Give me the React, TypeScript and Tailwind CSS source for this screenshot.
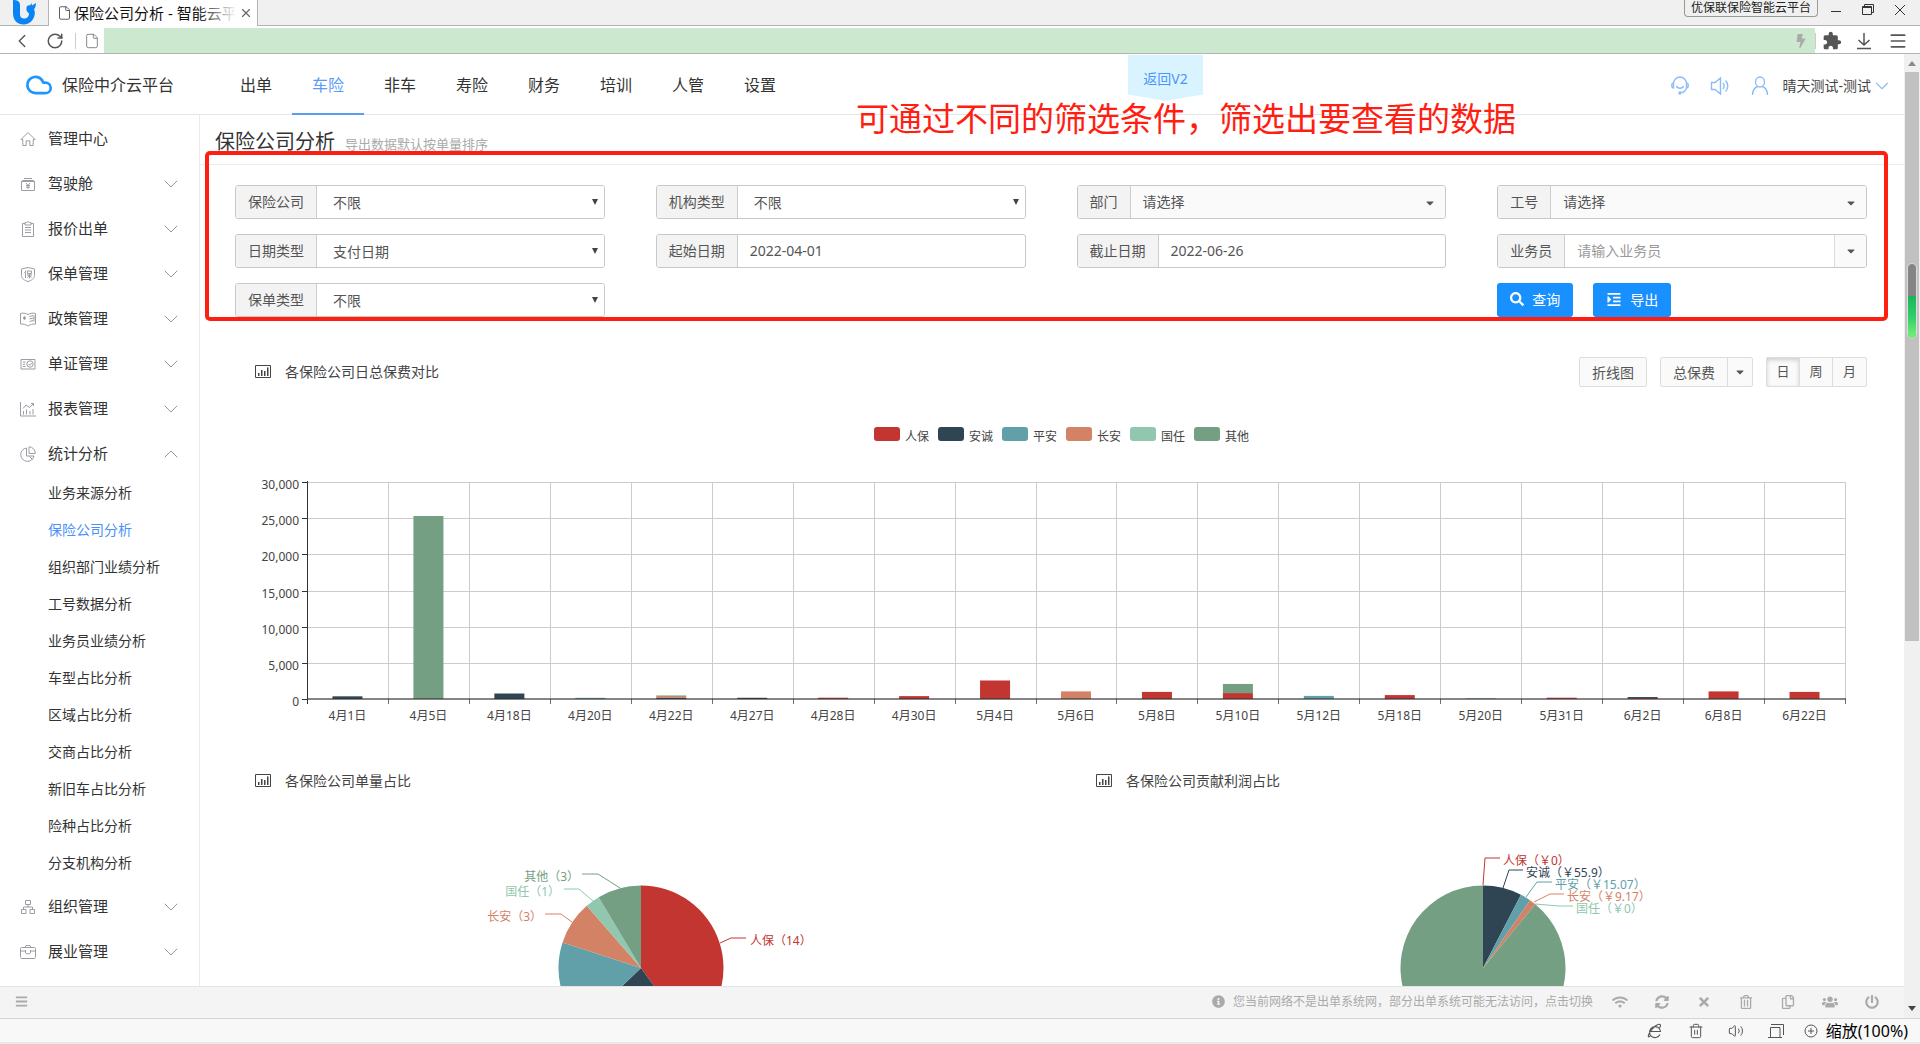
import React, { useState } from 'react';
import { Cloud, ChevronDown, ChevronUp, ChevronLeft, RotateCw, File, Trash2, Volume2, Menu, X } from 'lucide-react';
import { FaInfoCircle, FaWifi, FaSyncAlt, FaTimes, FaRegTrashAlt, FaRegCopy, FaUsers, FaPowerOff, FaBars, FaSearch, FaIndent, FaBolt, FaCaretDown } from 'react-icons/fa';
import { MdExtension } from 'react-icons/md';

const COLORS: Record<string, string> = {
    人保: '#c23531',
    安诚: '#2f4554',
    平安: '#61a0a8',
    长安: '#d48265',
    国任: '#91c7ae',
    其他: '#749f83',
};

const NAV = ['出单', '车险', '非车', '寿险', '财务', '培训', '人管', '设置'];

type IconName = 'home' | 'cockpit' | 'clipboard' | 'shield' | 'policy' | 'cert' | 'report' | 'pie' | 'org' | 'case';

interface MenuEntry {
    label: string;
    icon: IconName;
    children?: string[];
    leaf?: boolean;
}

const MENU: MenuEntry[] = [
    { label: '管理中心', icon: 'home', leaf: true },
    { label: '驾驶舱', icon: 'cockpit' },
    { label: '报价出单', icon: 'clipboard' },
    { label: '保单管理', icon: 'shield' },
    { label: '政策管理', icon: 'policy' },
    { label: '单证管理', icon: 'cert' },
    { label: '报表管理', icon: 'report' },
    {
        label: '统计分析',
        icon: 'pie',
        children: ['业务来源分析', '保险公司分析', '组织部门业绩分析', '工号数据分析', '业务员业绩分析', '车型占比分析', '区域占比分析', '交商占比分析', '新旧车占比分析', '险种占比分析', '分支机构分析'],
    },
    { label: '组织管理', icon: 'org' },
    { label: '展业管理', icon: 'case' },
];

const MenuIcon: React.FC<{ name: IconName }> = ({ name }) => (
    <svg viewBox="0 0 16 16" className="w-4 h-4 shrink-0 text-[#9a9da3]" fill="none" stroke="currentColor" strokeWidth="1">
        {name === 'home' && <path d="M1 8.5 8 1.5l7 7h-1.8v6h-3.4V9.8H6.2v4.7H2.8v-6z" strokeLinejoin="round" />}
        {name === 'cockpit' && (
            <>
                <path d="M4 2.5h8M1.5 5.5h13v9h-13zM1.5 5.5l1-1h11l1 1" />
                <path d="m6 7 2 2.5L10 7M6 9.5h4M6 11.2h4M8 9.5V13" />
            </>
        )}
        {name === 'clipboard' && <path d="M5 2.5H2.5v13h11v-13H11M5 1.5h1.5L8 .5l1.5 1H11v2.500H5zM5 6.500h6M5 9h6M5 11.500h6" />}
        {name === 'shield' && (
            <>
                <path d="M1.500 3 8 1.500 14.500 3v6.500c0 3-3 5-6.500 6-3.500-1-6.500-3-6.500-6z" />
                <path d="M6 4.500 4.500 7M5.500 6.500V12M7.500 5h4v2.500h-4zM7 9h5M9.500 7.500V12.500M9.500 9 7.500 11.500M9.500 9l2 2.500" />
            </>
        )}
        {name === 'policy' && (
            <>
                <path d="M.500 2.500c3-1 5.500 0 7.500 1 2-1 4.500-2 7.500-1v10.500c-3 0-5.500.500-7.500 2-2-1.500-4.500-2-7.500-2z" />
                <path d="M9.500 5.500l4-1M9.500 8l4-1M9.500 10.500l4-1M14 4.500v6" />
                <path d="M4.500 5.200v3.600M3 6l3 2M6 6 3 8" />
            </>
        )}
        {name === 'cert' && (
            <>
                <path d="M1 3.500h14v9.500H1zM3 6h2.500M3 8.300h2M3 10.500h2.500" />
                <circle cx="10" cy="8" r="3.200" />
                <path d="m8.500 8 1.200 1.200 2.300-2.400" />
            </>
        )}
        {name === 'report' && <path d="M.500 1v14H16M3.500 13.500V10M6.500 13.500V8.500M10 13.500V10M13 13.500V8M3 7.500l3-3.500 3.500 2.500L13.500 2.500M11 2.500h2.500V5" />}
        {name === 'pie' && <path d="M6.500 2A6.700 6.700 0 1 0 14 10H6.500zM9 .800A6.500 6.500 0 0 1 15.300 7.500H9zM9.500 10.500l3 3" />}
        {name === 'org' && <path d="M5.500 1.500h5v4h-5zM1.500 10.500h4.500v4H1.500zM10 10.500h4.500v4H10zM8 5.500V8M3.500 10.500V8h9v2.500" />}
        {name === 'case' && <path d="M2 3.500h12c1 0 1.500.500 1.500 1.500v8.500c0 .500-.500 1-1.500 1H2c-1 0-1.500-.500-1.500-1V5C.500 4 1 3.500 2 3.500zM5 3.500 6 1.500h4l1 2M.500 7h5M10.500 7h5M5.500 6v3c0 1 5 1 5 0V6" />}
    </svg>
);

const BrowserChrome: React.FC = () => (
    <div className="shrink-0">
        <div className="flex h-[26px] bg-[#f0f0f0] border-b border-[#b4b4b4]">
            <div className="w-12 pl-3 shrink-0">
                <svg viewBox="0 0 24 25" className="w-6 h-[25px]">
                    <path d="M1 0c4 0 7 1 7 5v9c0 3 1.500 4.500 4 4.500 3 0 5-2 5-5-2-1.500-3-3.500-2.500-6C15 6 16 5 18 5.500L19.500 3 20 5.500 24 3c0 3-1 5-2 6.500 1 1.500 1 4 .5 6C21 21 17 24.500 12 24.500 5 24.500 1 20 1 13z" fill="#0a84f5" />
                </svg>
            </div>
            <div className="relative flex items-center h-[26px] w-[210px] pl-2 pr-1 bg-white border-x border-[#b4b4b4] shrink-0">
                <File className="w-[15px] h-4 text-[#555] shrink-0" strokeWidth={1.500} />
                <span className="ml-[2px] flex-1 overflow-hidden whitespace-nowrap text-[15px] leading-6 text-[#111]">保险公司分析 - 智能云平台</span>
                <span className="absolute right-5 top-0 h-6 w-10 bg-linear-to-r from-transparent to-white" />
                <button aria-label="关闭标签" className="ml-1"><X className="w-[14px] h-[14px] text-[#666]" strokeWidth={2} /></button>
            </div>
            <div className="flex-1" />
            <div className="h-[17px] px-[6px] mr-3 border border-t-0 border-[#999] rounded-b text-[12px] leading-4 text-[#222]">优保联保险智能云平台</div>
            <div className="flex items-start gap-5 pr-[14px] pt-1 text-[#333]">
                <button aria-label="最小化">
                    <svg viewBox="0 0 12 12" className="w-3 h-3" fill="none" stroke="currentColor"><path d="M1 7.500h10" /></svg>
                </button>
                <button aria-label="还原">
                    <svg viewBox="0 0 12 12" className="w-3 h-3" fill="none" stroke="currentColor"><path d="M2.500 2V.500h9v8H10M.500 2.500h9v8h-9zM.500 3.500h9" /></svg>
                </button>
                <button aria-label="关闭">
                    <svg viewBox="0 0 12 12" className="w-3 h-3" fill="none" stroke="currentColor"><path d="m1 1 10 10M11 1 1 11" /></svg>
                </button>
            </div>
        </div>
        <div className="flex items-center h-7 pt-[2px] bg-white border-b border-[#b4b4b4] text-[#555]">
            <button aria-label="后退" className="ml-[11px]"><ChevronLeft className="w-[22px] h-[22px]" strokeWidth={1.500} /></button>
            <button aria-label="刷新" className="ml-[13px]"><RotateCw className="w-[18px] h-[18px]" strokeWidth={2} /></button>
            <span className="ml-[11px] w-px h-4 bg-[#ccc]" />
            <File className="ml-2 mr-1 w-4 h-4 text-[#888]" strokeWidth={1.500} />
            <div className="flex flex-1 items-center justify-end self-stretch pr-2 bg-[#cce8cf]">
                <FaBolt className="w-3 h-[14px] text-[#aaa]" />
            </div>
            <span className="w-px h-4 bg-[#ccc]" />
            <button aria-label="扩展" className="ml-[6px]"><MdExtension className="w-5 h-5" /></button>
            <button aria-label="下载" className="ml-[14px]">
                <svg viewBox="0 0 16 18" className="w-4 h-[18px]" fill="none" stroke="currentColor" strokeWidth="1.500"><path d="M8 1v12M2.500 8 8 13l5.500-5M1 16.500h14" /></svg>
            </button>
            <button aria-label="菜单" className="ml-4 mr-3"><Menu className="w-5 h-5" strokeWidth={2} /></button>
        </div>
    </div>
);

const Header: React.FC = () => (
    <header className="relative flex items-center h-[61px] shrink-0 bg-white border-b border-[#e6e6e6]">
        <div className="flex items-center w-[220px] pl-[25px] pt-[2px] gap-[9px] shrink-0">
            <Cloud className="w-7 h-7 text-[#1e96ff]" strokeWidth={2.300} />
            <span className="text-[16px] leading-6 text-[#333]">保险中介云平台</span>
        </div>
        <nav className="flex h-[61px]">
            {NAV.map((item) => (
                <a
                    key={item}
                    href="#"
                    className={item === '车险'
                        ? 'flex items-center w-[72px] justify-center text-[16px] text-[#5b9bf8] border-b-2 border-[#5b9bf8] pt-1'
                        : 'flex items-center w-[72px] justify-center text-[16px] text-[#333] pt-[2px]'}
                >
                    {item}
                </a>
            ))}
        </nav>
        <a href="#" className="absolute left-[1128px] top-px w-[75px] h-[46px] pt-3 text-center text-[14px] leading-6 text-[#4d94fa] bg-[#daf4ff] [clip-path:polygon(0_0,100%_0,100%_86%,50%_100%,0_86%)]">返回V2</a>
        <div className="ml-auto flex items-center gap-5 pr-[11px] pt-1 text-[#8cbcf8]">
            <button aria-label="客服">
                <svg viewBox="0 0 20 20" className="w-5 h-5" fill="none" stroke="currentColor" strokeWidth="1.400"><path d="M3.500 7.500a6.500 6.500 0 0 1 13 0M3.500 7C1 7.500 1 11.500 3.500 12zM16.500 7c2.500.500 2.500 4.500 0 5zM16.500 12c-1 3-3 4.500-5 4.500M6.500 10c1 3 6 3 7 0" /><circle cx="10" cy="17" r="1" fill="currentColor" /></svg>
            </button>
            <button aria-label="公告">
                <svg viewBox="0 0 20 20" className="w-5 h-5" fill="none" stroke="currentColor" strokeWidth="1.400"><path d="M1.500 6.500H5l5.500-4.500v16L5 13.500H1.500zM13 7c1.500 1.500 1.500 4.500 0 6M15.500 4.500c3 3 3 8 0 11" /></svg>
            </button>
            <button className="flex items-center">
                <svg viewBox="0 0 20 20" className="w-5 h-5 mr-3" fill="none" stroke="currentColor" strokeWidth="1.400"><ellipse cx="10" cy="6" rx="4.500" ry="5" /><path d="M7.500 10.500C4 12 2.500 15 2.500 19M12.500 10.500C16 12 17.500 15 17.500 19" /></svg>
                <span className="text-[14px] leading-6 text-[#444]">晴天测试-测试</span>
                <ChevronDown className="w-[22px] h-[22px]" strokeWidth={1.200} />
            </button>
        </div>
    </header>
);

const Sidebar: React.FC = () => (
    <aside className="w-[200px] shrink-0 border-r border-[#ebebeb] pt-px overflow-hidden">
        {MENU.map((entry) => (
            <div key={entry.label}>
                <button className="flex items-center w-full h-[45px] pl-5 pr-4 text-[15px] text-[#333]">
                    <MenuIcon name={entry.icon} />
                    <span className="ml-3">{entry.label}</span>
                    {!entry.leaf && (entry.children
                        ? <ChevronUp className="ml-auto w-6 h-6 text-[#999]" strokeWidth={1} />
                        : <ChevronDown className="ml-auto w-6 h-6 text-[#999]" strokeWidth={1} />)}
                </button>
                {entry.children && (
                    <div className="-mt-[2px] pb-[3px]">
                        {entry.children.map((child) => (
                            <a
                                key={child}
                                href="#"
                                className={child === '保险公司分析'
                                    ? 'flex items-center h-[37px] pl-12 text-[14px] text-[#4a90f9]'
                                    : 'flex items-center h-[37px] pl-12 text-[14px] text-[#333]'}
                            >
                                {child}
                            </a>
                        ))}
                    </div>
                )}
            </div>
        ))}
    </aside>
);

const Addon: React.FC<{ id: string; label: string }> = ({ id, label }) => (
    <label htmlFor={id} className="flex items-center shrink-0 px-3 pb-[2px] bg-[#f3f3f3] border-r border-[#ccc] text-[14px]">{label}</label>
);

const GROUP = 'relative flex h-[34px] bg-white border border-[#c8c8c8] rounded-[3px] overflow-hidden text-[#555]';

const SelectField: React.FC<{ id: string; label: string; value: string }> = ({ id, label, value }) => (
    <div className={GROUP}>
        <Addon id={id} label={label} />
        <select id={id} className="flex-1 min-w-0 appearance-none bg-white pl-4 text-[14px] outline-none">
            <option>{value}</option>
        </select>
        <svg viewBox="0 0 6 6" className="absolute right-[6px] top-[13px] w-[6px] h-[6px] pointer-events-none"><path d="M0 0h6L3 6z" fill="#444" /></svg>
    </div>
);

const PickerField: React.FC<{ id: string; label: string }> = ({ id, label }) => (
    <div className={GROUP}>
        <Addon id={id} label={label} />
        <button id={id} className="flex flex-1 items-center justify-between pl-3 pr-[9px] pb-[2px] bg-[#fafafa] text-[14px]">
            请选择
            <FaCaretDown className="w-3 h-3 mt-1" />
        </button>
    </div>
);

const DateField: React.FC<{ id: string; label: string; initial: string }> = ({ id, label, initial }) => {
    const [value, setValue] = useState(initial);
    return (
        <div className={GROUP}>
            <Addon id={id} label={label} />
            <input id={id} type="text" value={value} onChange={(e) => setValue(e.target.value)} className="flex-1 min-w-0 px-3 pb-[2px] text-[14px] outline-none" />
        </div>
    );
};

const Filters: React.FC = () => (
    <form className="grid grid-cols-4 gap-x-[51px] gap-y-[15px] pl-[35px] pr-[37px] pt-5 shrink-0" onSubmit={(e) => e.preventDefault()}>
        <SelectField id="company" label="保险公司" value="不限" />
        <SelectField id="orgType" label="机构类型" value="不限" />
        <PickerField id="dept" label="部门" />
        <PickerField id="jobNo" label="工号" />
        <SelectField id="dateType" label="日期类型" value="支付日期" />
        <DateField id="startDate" label="起始日期" initial="2022-04-01" />
        <DateField id="endDate" label="截止日期" initial="2022-06-26" />
        <div className={GROUP}>
            <Addon id="agent" label="业务员" />
            <input id="agent" type="text" placeholder="请输入业务员" className="flex-1 min-w-0 px-3 pb-[2px] text-[14px] outline-none placeholder:text-[#999]" />
            <button type="button" aria-label="展开业务员" className="flex items-center justify-center w-8 bg-[#fafafa] border-l border-[#ddd]"><FaCaretDown className="w-3 h-3" /></button>
        </div>
        <SelectField id="policyType" label="保单类型" value="不限" />
        <div className="flex col-start-4 gap-5">
            <button className="flex items-center gap-2 h-[34px] px-[13px] pb-[2px] bg-[#1890ff] rounded-[3px] text-[14px] text-white"><FaSearch className="w-[14px] h-[14px]" />查询</button>
            <button type="button" className="flex items-center gap-2 h-[34px] px-[13px] pb-[2px] bg-[#1890ff] rounded-[3px] text-[14px] text-white"><FaIndent className="w-4 h-[15px]" />导出</button>
        </div>
    </form>
);

const PanelTitle: React.FC<{ text: string }> = ({ text }) => (
    <h3 className="flex items-center gap-[14px] pb-[2px] text-[14px] text-[#444]">
        <svg viewBox="0 0 16 13" className="w-4 h-[13px]" fill="none" stroke="#444"><path d="M.5.5h15v12H.5zM3.500 11V8M6.500 11V5M9.500 11V6M12.500 11V2.500" /><path d="M4 11V8M7 11V5M10 11V6M13 11V2.500" /></svg>
        {text}
    </h3>
);

type Day = [string, [string, number][]];

const DAYS: Day[] = [
    ['4月1日', [['安诚', 370]]],
    ['4月5日', [['其他', 25300]]],
    ['4月18日', [['安诚', 760]]],
    ['4月20日', [['平安', 160]]],
    ['4月22日', [['安诚', 200], ['长安', 240], ['国任', 100]]],
    ['4月27日', [['安诚', 170]]],
    ['4月28日', [['人保', 180]]],
    ['4月30日', [['人保', 400]]],
    ['5月4日', [['人保', 2560]]],
    ['5月6日', [['长安', 1050]]],
    ['5月8日', [['人保', 980]]],
    ['5月10日', [['人保', 820], ['其他', 1260]]],
    ['5月12日', [['平安', 430]]],
    ['5月18日', [['人保', 540]]],
    ['5月20日', [['国任', 130]]],
    ['5月31日', [['人保', 180]]],
    ['6月2日', [['人保', 140], ['安诚', 130]]],
    ['6月8日', [['人保', 1050]]],
    ['6月22日', [['人保', 980]]],
];

const BarChart: React.FC = () => {
    const left = 107;
    const right = 1645;
    const base = 312;
    const height = 217;
    const step = (right - left) / DAYS.length;
    return (
        <svg viewBox="0 0 1704 375" className="w-full h-auto shrink-0 text-[12px]" fill="#444">
            {Object.entries(COLORS).map(([name, color], i) => (
                <g key={name}>
                    <rect x={674 + i * 64} y="40" width="26" height="14" rx="3" fill={color} />
                    <text x={705 + i * 64} y="54">{name}</text>
                </g>
            ))}
            <g stroke="#ccc" shapeRendering="crispEdges">
                {[1, 2, 3, 4, 5, 6].map((n) => (
                    <line key={n} x1={left} x2={right} y1={Math.round(base - (n * height) / 6)} y2={Math.round(base - (n * height) / 6)} />
                ))}
                {DAYS.map(([day], i) => (
                    <line key={day} x1={Math.round(left + (i + 1) * step)} x2={Math.round(left + (i + 1) * step)} y1={base - height} y2={base} />
                ))}
            </g>
            {DAYS.map(([day, parts], i) => {
                let sum = 0;
                return (
                    <g key={day}>
                        {parts.map(([name, value]) => {
                            sum += value;
                            return <rect key={name} x={left + (i + 0.5) * step - 15} y={base - (sum * height) / 30000} width="30" height={(value * height) / 30000} fill={COLORS[name]} />;
                        })}
                        <text x={left + (i + 0.5) * step} y="333" textAnchor="middle">{day}</text>
                    </g>
                );
            })}
            <line x1={left} x2={right + 1} y1={base} y2={base} stroke="#333" strokeOpacity=".6" strokeWidth="2" />
            <g stroke="#333" shapeRendering="crispEdges">
                <line x1={left} x2={left} y1={base - height - 1} y2={base + 5} />
                {[0, 1, 2, 3, 4, 5, 6].map((n) => (
                    <line key={n} x1={left - 5} x2={left} y1={Math.round(base - (n * height) / 6)} y2={Math.round(base - (n * height) / 6)} />
                ))}
                {DAYS.map(([day], i) => (
                    <line key={day} x1={Math.round(left + (i + 1) * step)} x2={Math.round(left + (i + 1) * step)} y1={base} y2={base + 5} strokeOpacity=".7" />
                ))}
            </g>
            {[0, 1, 2, 3, 4, 5, 6].map((n) => (
                <text key={n} x={left - 8} y={base - (n * height) / 6 + 7} textAnchor="end">{(n * 5000).toLocaleString('en-US')}</text>
            ))}
        </svg>
    );
};

interface Slice {
    name: string;
    value: number;
    label?: string;
    line?: string;
    x?: number;
    y?: number;
    end?: boolean;
}

const COUNT_SLICES: Slice[] = [
    { name: '人保', value: 14, label: '人保（14）', line: '510,143 521,138 536,138', x: 540, y: 145 },
    { name: '安诚', value: 8 },
    { name: '平安', value: 6 },
    { name: '长安', value: 3, label: '长安（3）', line: '362,122 351,114 335,114', x: 332, y: 121, end: true },
    { name: '国任', value: 1, label: '国任（1）', line: '383,101 369,89 354,89', x: 350, y: 96, end: true },
    { name: '其他', value: 3, label: '其他（3）', line: '410,88 388,74 372,74', x: 369, y: 81, end: true },
];

const PROFIT_SLICES: Slice[] = [
    { name: '人保', value: 0, label: '人保（￥0）', line: '431,85 433,58 448,58', x: 451, y: 65 },
    { name: '安诚', value: 55.9, label: '安诚（￥55.9）', line: '451,88 457,70 471,70', x: 474, y: 77 },
    { name: '平安', value: 15.07, label: '平安（￥15.07）', line: '474,97 485,82 500,82', x: 503, y: 89 },
    { name: '长安', value: 9.17, label: '长安（￥9.17）', line: '482,102 498,94 512,94', x: 515, y: 101 },
    { name: '国任', value: 0, label: '国任（￥0）', line: '483,104 507,106 521,106', x: 524, y: 113 },
    { name: '其他', value: 654 },
];

const PieChart: React.FC<{ slices: Slice[] }> = ({ slices }) => {
    const cx = 431;
    const cy = 168;
    const r = 82.5;
    const total = slices.reduce((acc, s) => acc + s.value, 0);
    let angle = 0;
    return (
        <svg viewBox="0 0 842 280" className="w-full h-auto text-[12px]">
            {slices.map((s) => {
                const start = angle;
                angle += (s.value / total) * Math.PI * 2;
                const point = (a: number) => `${cx + r * Math.sin(a)} ${cy - r * Math.cos(a)}`;
                return (
                    <g key={s.name} fill={COLORS[s.name]}>
                        {s.value > 0 && <path d={`M${cx} ${cy}L${point(start)}A${r} ${r} 0 ${angle - start > Math.PI ? 1 : 0} 1 ${point(angle)}Z`} />}
                        {s.line && <polyline points={s.line} fill="none" stroke={COLORS[s.name]} />}
                        {s.label && <text x={s.x} y={s.y} textAnchor={s.end ? 'end' : 'start'}>{s.label}</text>}
                    </g>
                );
            })}
        </svg>
    );
};

const Content: React.FC = () => {
    const [period, setPeriod] = useState('日');
    return (
        <main className="relative flex flex-col flex-1 min-w-0 overflow-hidden">
            <div className="flex items-baseline h-[50px] pl-[15px] pt-3 gap-[10px] border-b border-[#ebebeb] shrink-0">
                <h1 className="text-[20px] leading-[30px] text-[#333]">保险公司分析</h1>
                <small className="text-[13px] text-[#aaa]">导出数据默认按单量排序</small>
            </div>
            <Filters />
            <div className="flex items-center mt-10 pl-[55px] pr-[37px] h-[30px] shrink-0 text-[14px] text-[#555]">
                <PanelTitle text="各保险公司日总保费对比" />
                <button className="ml-auto h-[30px] px-3 bg-[#fafafa] border border-[#ddd] rounded-[2px]">折线图</button>
                <div className="flex h-[30px] ml-[13px] bg-[#fafafa] border border-[#ddd] rounded-[2px]">
                    <button className="px-3">总保费</button>
                    <button aria-label="选择指标" className="flex items-center justify-center w-[25px] border-l border-[#ddd]"><FaCaretDown className="w-3 h-3" /></button>
                </div>
                <div className="flex h-[30px] ml-[13px] bg-[#fafafa] border border-[#ddd] rounded-[2px] text-[13px]">
                    {['日', '周', '月'].map((p) => (
                        <button
                            key={p}
                            onClick={() => setPeriod(p)}
                            className={period === p
                                ? 'w-[33px] border-r border-[#ddd] last:border-r-0 shadow-[inset_0_2px_4px_rgba(0,0,0,0.18)]'
                                : 'w-[33px] border-r border-[#ddd] last:border-r-0'}
                        >
                            {p}
                        </button>
                    ))}
                </div>
            </div>
            <BarChart />
            <div className="grid grid-cols-2 px-[10px] shrink-0">
                <section>
                    <div className="flex items-center h-[38px] pl-[45px]"><PanelTitle text="各保险公司单量占比" /></div>
                    <PieChart slices={COUNT_SLICES} />
                </section>
                <section>
                    <div className="flex items-center h-[38px] pl-11"><PanelTitle text="各保险公司贡献利润占比" /></div>
                    <PieChart slices={PROFIT_SLICES} />
                </section>
            </div>
            <div className="absolute left-[5px] right-4 top-9 h-[170px] border-4 border-[#ff1e12] rounded-[5px] pointer-events-none" />
        </main>
    );
};

const Scrollbar: React.FC = () => (
    <div className="relative flex flex-col items-center w-4 shrink-0 bg-[#f0f0f0]">
        <svg viewBox="0 0 8 5" className="w-2 h-[5px] mt-[7px] mb-[6px] shrink-0"><path d="M4 0l4 5H0z" fill="#888" /></svg>
        <div className="w-[14px] h-[59%] bg-[#c1c1c1]" />
        <svg viewBox="0 0 8 5" className="w-2 h-[5px] mt-auto mb-[7px] shrink-0"><path d="M0 0h8L4 5z" fill="#444" /></svg>
        <div className="absolute left-[3px] top-[209px] w-[10px] h-[76px] rounded-full border border-[#ddd] bg-[#858585] overflow-hidden">
            <div className="mt-8 h-[44px] bg-linear-to-b from-[#1eb45a] via-[#2fd06a] to-[#7cf47c]" />
        </div>
    </div>
);

const FOOT_ICONS = [
    { label: '网络', Icon: FaWifi },
    { label: '刷新', Icon: FaSyncAlt },
    { label: '关闭', Icon: FaTimes },
    { label: '清理', Icon: FaRegTrashAlt },
    { label: '复制', Icon: FaRegCopy },
    { label: '用户', Icon: FaUsers },
    { label: '退出', Icon: FaPowerOff },
];

const AppFooter: React.FC = () => (
    <footer className="flex items-center h-8 shrink-0 pl-[15px] pr-6 pb-[2px] bg-[#f4f4f4] border-t border-[#e4e4e4] text-[#aaa]">
        <button aria-label="收起菜单"><FaBars className="w-[13px] h-[13px]" /></button>
        <FaInfoCircle className="ml-auto w-[13px] h-[13px]" />
        <a href="#" className="ml-2 text-[12px] leading-4">您当前网络不是出单系统网，部分出单系统可能无法访问，点击切换</a>
        <div className="flex ml-[19px] gap-[26px]">
            {FOOT_ICONS.map(({ label, Icon }) => (
                <button key={label} aria-label={label}><Icon className="w-4 h-[14px]" /></button>
            ))}
        </div>
    </footer>
);

const StatusBar: React.FC = () => (
    <div className="flex items-center justify-end h-[26px] shrink-0 pr-3 bg-[#f8f8f8] border-t border-t-[#d4d4d4] border-b-2 border-b-[#e8e8e8] text-[#555]">
        <button aria-label="内核切换" className="mr-[25px]">
            <svg viewBox="0 0 16 16" className="w-4 h-4" fill="none" stroke="currentColor" strokeWidth="1.100"><path d="M13 11.500A5.500 5.500 0 1 1 13.500 8.500H3M3.500 12.500C1 15.500.5 13 3 9 6 4 11 .5 13 1.500c1 .5.500 2-.5 3.500" /></svg>
        </button>
        <button aria-label="清除痕迹" className="mr-6"><Trash2 className="w-4 h-4" strokeWidth={1.500} /></button>
        <button aria-label="静音" className="mr-6"><Volume2 className="w-4 h-4" strokeWidth={1.500} /></button>
        <button aria-label="窗口" className="mr-5">
            <svg viewBox="0 0 16 16" className="w-4 h-4" fill="none" stroke="currentColor"><path d="M3 1.500h12.500V12M2.500 4.500h9.500v9.500M2.500 4.500v9.500M0 14.500h14" /></svg>
        </button>
        <button className="flex items-center gap-2">
            <svg viewBox="0 0 14 14" className="w-[14px] h-[14px]" fill="none" stroke="currentColor"><circle cx="7" cy="7" r="6" /><path d="M7 4v6M4 7h6" /></svg>
            <span className="text-[16px] leading-5 text-black">缩放(100%)</span>
        </button>
    </div>
);

const App: React.FC = () => (
    <div className="relative flex flex-col h-screen overflow-hidden bg-white font-['Noto_Sans','Noto_Sans_CJK_SC',sans-serif]">
        <BrowserChrome />
        <div className="flex flex-1 min-h-0">
            <div className="flex flex-col flex-1 min-w-0">
                <Header />
                <div className="flex flex-1 min-h-0">
                    <Sidebar />
                    <Content />
                </div>
                <AppFooter />
            </div>
            <Scrollbar />
        </div>
        <StatusBar />
        <p className="absolute left-[856px] top-[95px] text-[33px] leading-[48px] text-[#ff1e12] whitespace-nowrap pointer-events-none">可通过不同的筛选条件，筛选出要查看的数据</p>
    </div>
);

export default App;
